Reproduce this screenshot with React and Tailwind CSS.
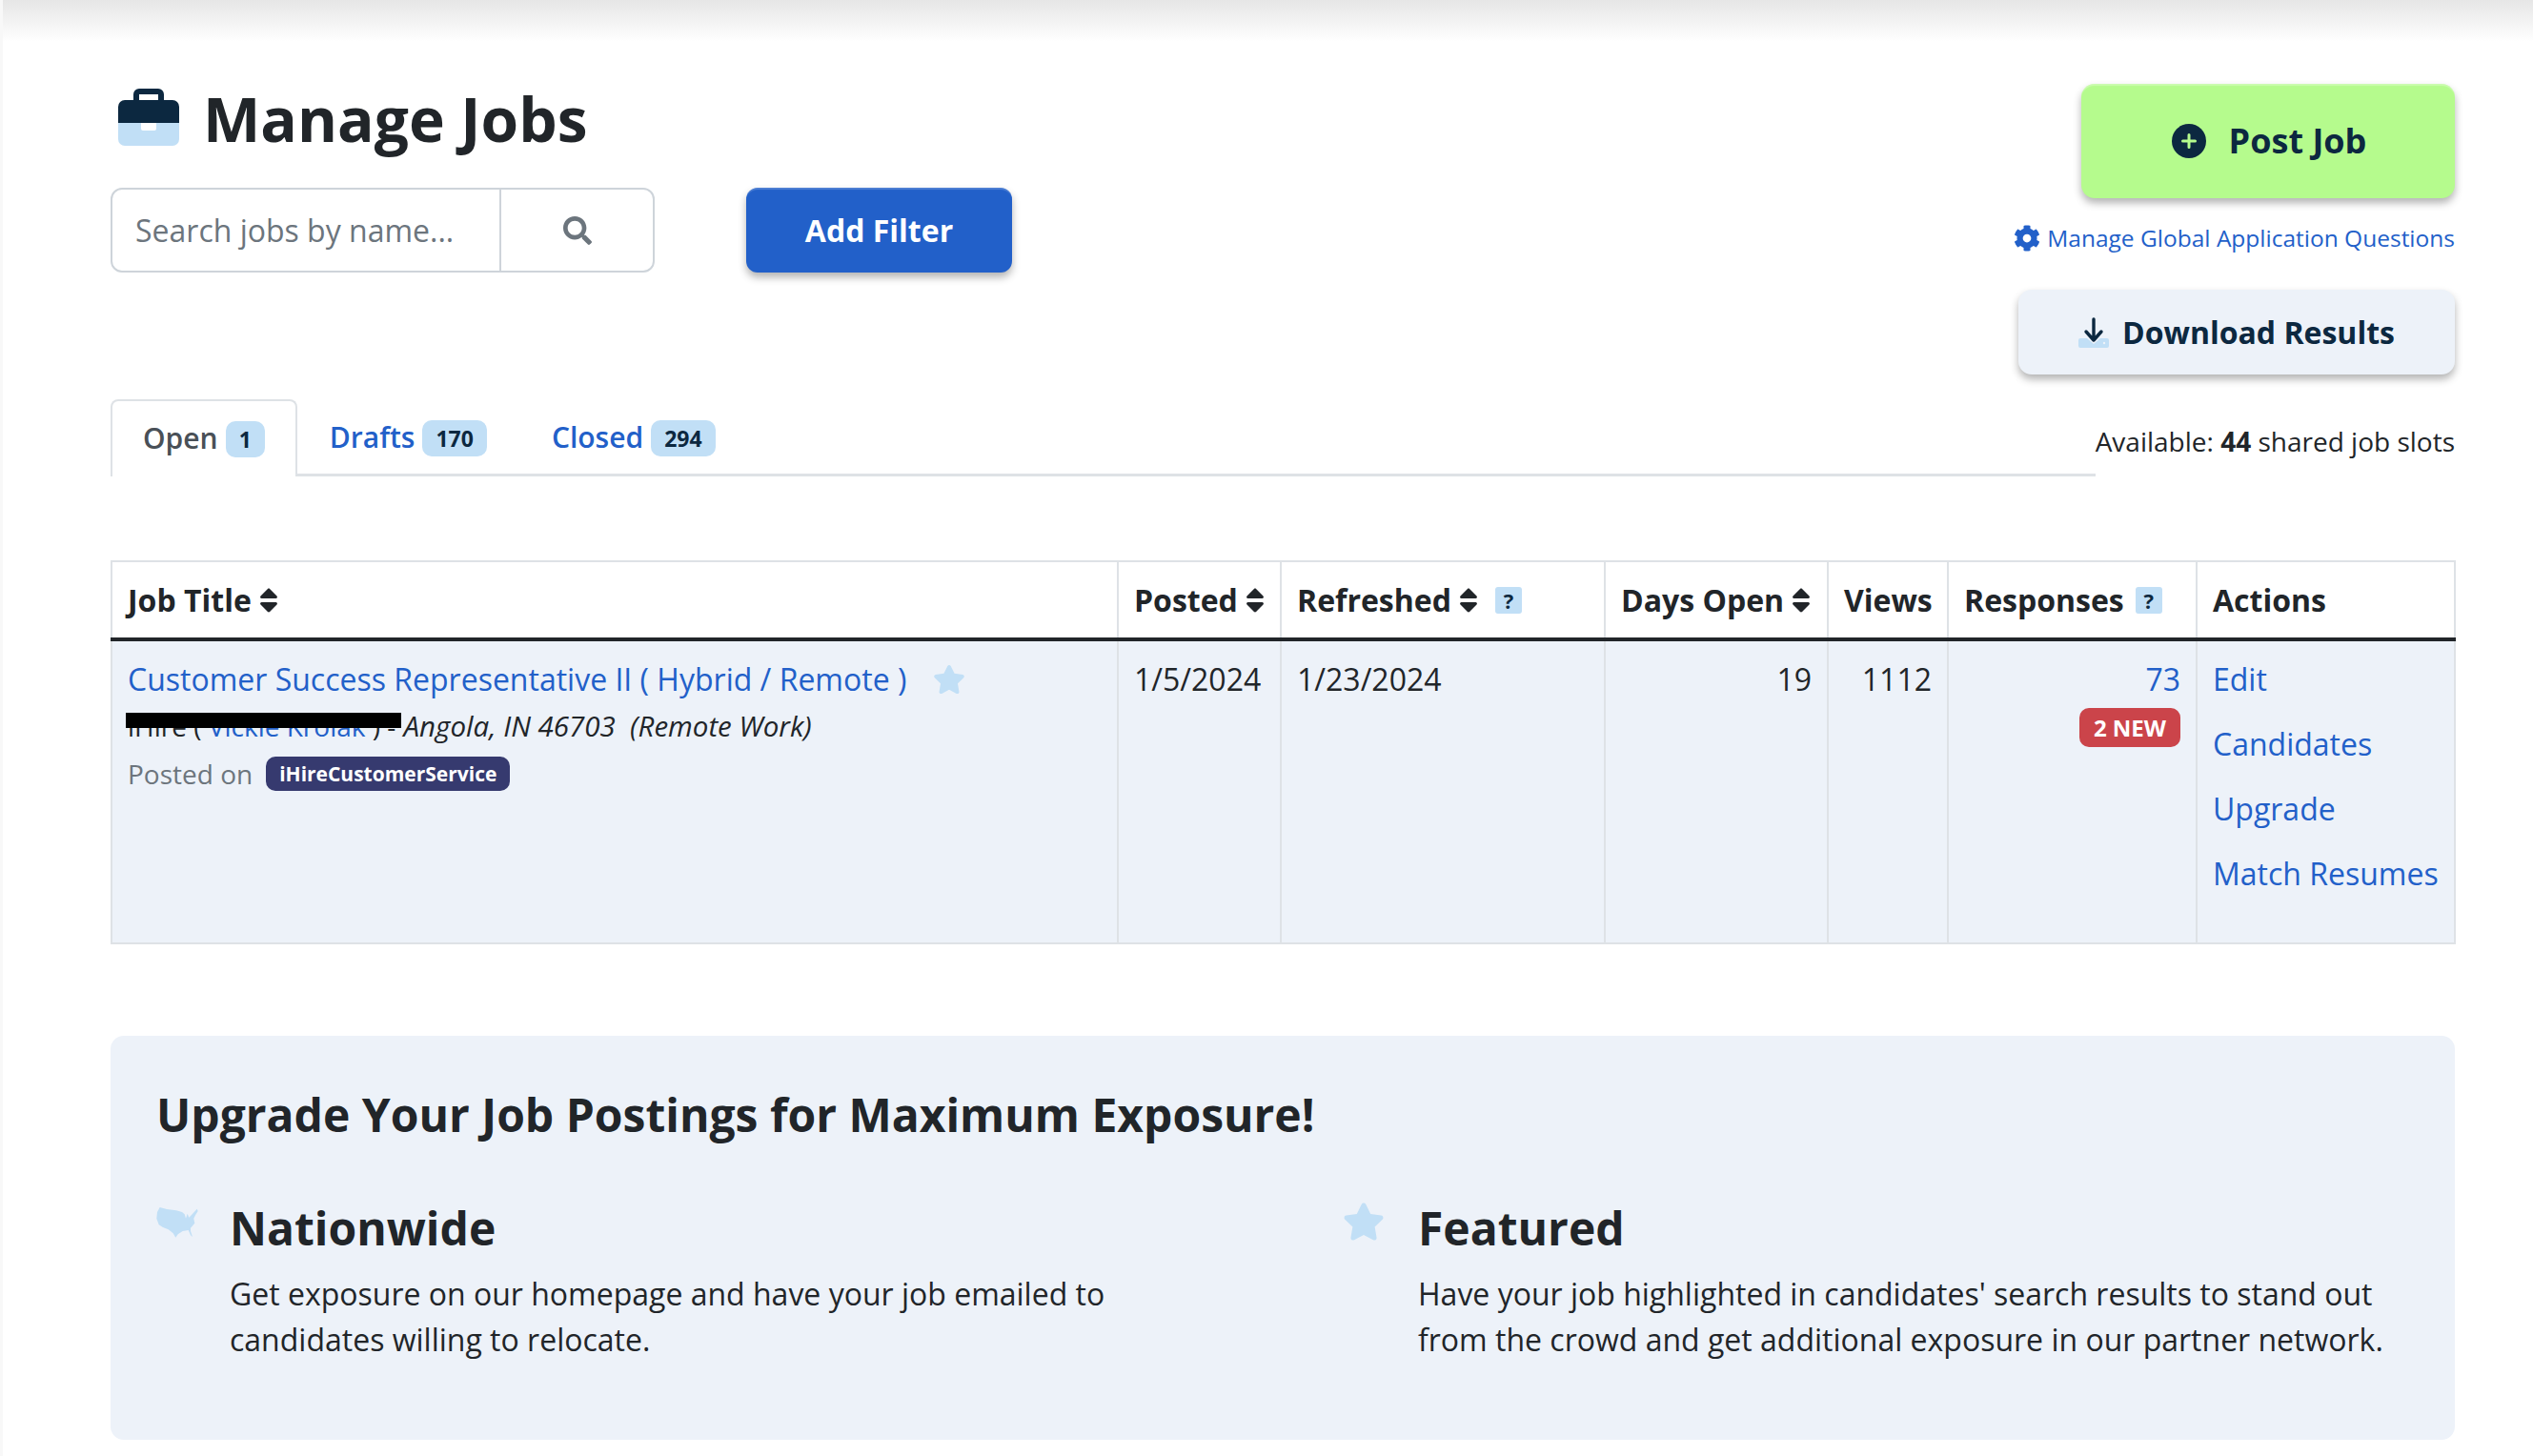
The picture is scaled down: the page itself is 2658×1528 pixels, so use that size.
import React from "react";
import { FaSearch, FaSort, FaCog, FaStar } from "react-icons/fa";

const Briefcase = () => (
  <svg viewBox="0 0 64 60" className="w-[64px] h-[60px] shrink-0">
    <path d="M16 14V6a6 6 0 0 1 6-6h20a6 6 0 0 1 6 6v8h-6V6H22v8z" fill="#0c2840" />
    <path d="M7 12h50a7 7 0 0 1 7 7v17H0V19a7 7 0 0 1 7-7z" fill="#0c2840" />
    <path d="M0 36h64v17a7 7 0 0 1-7 7H7a7 7 0 0 1-7-7z" fill="#c1dff6" />
    <path d="M24 36h16v6a2 2 0 0 1-2 2H26a2 2 0 0 1-2-2z" fill="#fff" />
  </svg>
);

const PlusCircle = () => (
  <svg viewBox="0 0 36 36" className="w-[36px] h-[36px] shrink-0">
    <circle cx="18" cy="18" r="18" fill="#0c2840" />
    <path d="M18 11.5v13M11.5 18h13" stroke="#b5fb8d" strokeWidth="3" strokeLinecap="round" />
  </svg>
);

const DownloadIcon = () => (
  <svg viewBox="0 0 32 32" className="w-[32px] h-[32px] shrink-0">
    <path d="M2 22h7l7 6 7-6h7a2 2 0 0 1 2 2v6a2 2 0 0 1-2 2H2a2 2 0 0 1-2-2v-6a2 2 0 0 1 2-2z" fill="#c1dff6" />
    <circle cx="27" cy="27" r="1.2" fill="#edf2f9" />
    <path d="M16 2v22M8 15l8 9 8-9" fill="none" stroke="#0c2840" strokeWidth="3.4" strokeLinecap="round" strokeLinejoin="round" />
  </svg>
);

const UsaIcon = () => (
  <svg viewBox="0 0 44 32" className="w-[44px] h-[32px] shrink-0">
    <path
      d="M3.7 0L11 2l10 1.3L27 5l2.7 2.3L31 11.7l1.7-5 1.6 4 3.4-3.4 5-5.6 1 2.3L41 8.3l-1.7 3.4 1 5-4.3 5V25l2 6-2-1.7-2.3-5.3-6 1-5 3.3-2.4 3.4-2.6-4.4-5-4L7 21l-4.3-2.7-2.4-6.6L1 5z"
      fill="#c1dff6"
    />
  </svg>
);

const Tab = ({ label, count, active }) => (
  <div
    className={
      active
        ? "flex items-center gap-[8px] h-[81px] px-[32px] -mb-[3px] pb-[2px] bg-white border-2 border-b-0 border-[#dee2e6] rounded-t-[8px] text-[#495057]"
        : "flex items-center gap-[8px] h-[78px] px-[34px] text-[#2260c9]"
    }
  >
    <span className="text-[30px] font-semibold">{label}</span>
    <span className="text-[23px] font-bold text-[#0c2840] bg-[#c1dff6] rounded-[10px] px-[14px] h-[38px] leading-[38px] mt-[3px]">
      {count}
    </span>
  </div>
);

const Th = ({ children, sort, help }) => (
  <th className="border-x-2 border-[#dee2e6] border-b-[4px] border-b-[#212529] px-[16px] text-left font-bold text-[32px] text-[#212529] whitespace-nowrap">
    <span className="flex items-center gap-[1px]">
      {children}
      {sort && <FaSort className="text-[#212529] text-[32px] shrink-0 ml-[1px]" />}
      {help && (
        <span className="ml-[11px] w-[28px] h-[28px] bg-[#c1dff6] rounded-[3px] text-[#0c2840] text-[22px] font-bold leading-[28px] text-center">?</span>
      )}
    </span>
  </th>
);

const Td = ({ children, className = "" }) => (
  <td className={`border-x-2 border-[#dee2e6] px-[16px] pt-[16px] align-top text-[32px] leading-[48px] text-[#212529] ${className}`}>
    {children}
  </td>
);

const Feature = ({ icon, title, text, className }) => (
  <div className={`flex ${className}`}>
    <div className="w-[77px] shrink-0">{icon}</div>
    <div>
      <h3 className="text-[48px] leading-[58px] font-bold text-[#212529]">{title}</h3>
      <p className="mt-[16px] text-[32px] leading-[48px] text-[#212529]">{text}</p>
    </div>
  </div>
);

export default function App() {
  return (
    <div className="min-h-screen bg-white font-['Open_Sans',sans-serif] overflow-hidden border-l-[3px] border-[#f8f8f8]">
      <div className="h-[44px] bg-gradient-to-b from-[#e6e6e6] to-white" />
      <div className="pl-[113px] pr-[82px] pb-[18px]">
        <div className="flex justify-between items-start pt-[44px]">
          <div>
            <div className="flex items-center gap-[25px] pl-[8px] h-[72px] mt-[-1px]">
              <Briefcase />
              <h1 className="text-[64px] leading-[72px] font-bold text-[#212529] mt-[3px]">Manage Jobs</h1>
            </div>
            <div className="flex gap-[96px] mt-[38px]">
              <div className="flex w-[571px] h-[89px] border-2 border-[#ced4da] rounded-[12px] bg-white">
                <input
                  placeholder="Search jobs by name..."
                  className="w-[408px] px-[24px] text-[32px] border-r-2 border-[#ced4da] outline-none placeholder:text-[#6c757d] bg-transparent"
                />
                <div className="flex-1 flex items-center justify-center text-[#6c757d] text-[30px]">
                  <FaSearch />
                </div>
              </div>
              <button className="w-[279px] h-[89px] bg-[#2260c9] rounded-[12px] text-white font-bold text-[32px] shadow-[inset_0_3px_1px_-1px_rgba(255,255,255,0.2),0_5px_8px_rgba(0,0,0,0.3)]">
                Add Filter
              </button>
            </div>
          </div>
          <div className="flex flex-col items-end">
            <button className="flex items-center justify-center gap-[24px] w-[392px] h-[120px] pl-[2px] bg-[#b5fb8d] rounded-[14px] text-[#0c2840] font-bold text-[36px] shadow-[inset_0_3px_1px_-1px_rgba(255,255,255,0.3),0_5px_8px_rgba(0,0,0,0.3)]">
              <PlusCircle />
              Post Job
            </button>
            <a className="flex items-center gap-[7px] mt-[24px] text-[24.5px] leading-[36px] text-[#2260c9]">
              <FaCog className="text-[28px]" />
              Manage Global Application Questions
            </a>
            <button className="flex items-center justify-center gap-[14px] w-[458px] h-[89px] mt-[36px] bg-[#edf2f9] rounded-[14px] text-[#0c2840] font-bold text-[32px] shadow-[0_5px_8px_rgba(0,0,0,0.3)]">
              <DownloadIcon />
              Download Results
            </button>
          </div>
        </div>

        <div className="flex items-end mt-[26px]">
          <div className="flex-1 flex border-b-[3px] border-[#dee2e6] h-[81px] items-end">
            <Tab label="Open" count="1" active />
            <Tab label="Drafts" count="170" />
            <Tab label="Closed" count="294" />
          </div>
          <div className="text-[28px] leading-[40px] pb-[17px] text-[#212529]">
            Available: <b>44</b> shared job slots
          </div>
        </div>

        <table className="w-[2459px] table-fixed mt-[88px] border-collapse">
          <colgroup>
            <col className="w-[1056px]" />
            <col className="w-[171px]" />
            <col className="w-[340px]" />
            <col className="w-[234px]" />
            <col className="w-[126px]" />
            <col className="w-[261px]" />
            <col className="w-[271px]" />
          </colgroup>
          <thead className="border-t-2 border-[#dee2e6]">
            <tr className="h-[82px]">
              <Th sort>Job Title</Th>
              <Th sort>Posted</Th>
              <Th sort help>Refreshed</Th>
              <Th sort>Days Open</Th>
              <Th>Views</Th>
              <Th help>Responses</Th>
              <Th>Actions</Th>
            </tr>
          </thead>
          <tbody className="border-b-2 border-[#dee2e6]">
            <tr className="bg-[#edf2f9] h-[319px]">
              <Td>
                <div className="flex items-center gap-[28px]">
                  <a className="text-[#2260c9]">Customer Success Representative II ( Hybrid / Remote )</a>
                  <FaStar className="text-[#c1dff6] text-[34px]" />
                </div>
                <div className="relative text-[28px] leading-[48px] mt-[1px]">
                  iHire ( <a className="text-[#2260c9]">Vickie Krolak</a> ) - <i className="text-[29.5px] ml-[1px]">Angola, IN 46703 &nbsp;(Remote Work)</i>
                  <div className="absolute -left-[2px] top-[10px] w-[289px] h-[16px] bg-black" />
                </div>
                <div className="flex items-center gap-[14px] text-[28px] leading-[44px] mt-[4px] text-[#6c757d]">
                  Posted on
                  <span className="bg-[#363a6f] text-white text-[21px] font-bold rounded-[10px] h-[36px] leading-[36px] px-[14px]">iHireCustomerService</span>
                </div>
              </Td>
              <Td>1/5/2024</Td>
              <Td>1/23/2024</Td>
              <Td className="text-right">19</Td>
              <Td className="text-right">1112</Td>
              <Td className="text-right">
                <a className="text-[#2260c9] block">73</a>
                <span className="inline-block mt-[3px] bg-[#cb444a] text-white text-[24px] font-bold rounded-[10px] h-[41px] leading-[41px] px-[15px]">2 NEW</span>
              </Td>
              <Td>
                <div className="flex flex-col gap-[20px] text-[#2260c9] whitespace-nowrap">
                  <a>Edit</a>
                  <a>Candidates</a>
                  <a>Upgrade</a>
                  <a>Match Resumes</a>
                </div>
              </Td>
            </tr>
          </tbody>
        </table>

        <section className="mt-[96px] h-[424px] bg-[#edf2f9] rounded-[14px] px-[48px] pt-[51px]">
          <h2 className="text-[48px] leading-[64px] font-bold text-[#212529]">Upgrade Your Job Postings for Maximum Exposure!</h2>
          <div className="flex mt-[58px]">
            <Feature
              className="w-[1247px]"
              icon={<div className="pt-[7px]"><UsaIcon /></div>}
              title="Nationwide"
              text={<>Get exposure on our homepage and have your job emailed to<br />candidates willing to relocate.</>}
            />
            <Feature
              className="flex-1"
              icon={<FaStar className="text-[#c1dff6] text-[44px] -ml-[2px]" />}
              title="Featured"
              text={<>Have your job highlighted in candidates' search results to stand out<br />from the crowd and get additional exposure in our partner network.</>}
            />
          </div>
        </section>
      </div>
    </div>
  );
}
